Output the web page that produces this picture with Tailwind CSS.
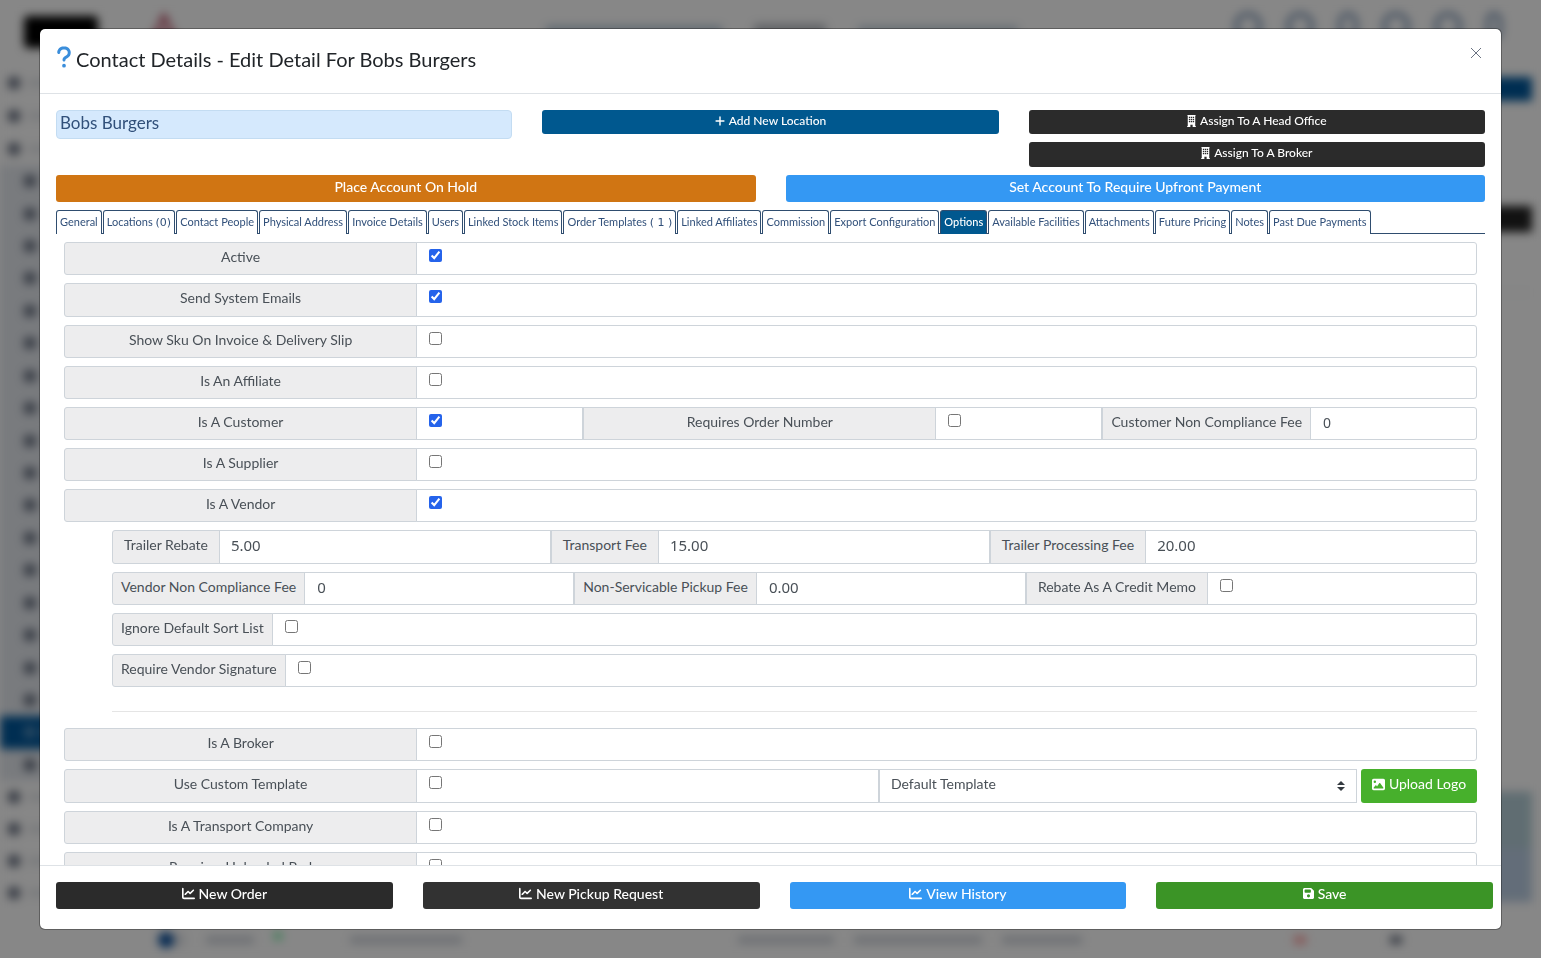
<!DOCTYPE html>
<html lang="en">
<head>
    <meta charset="UTF-8">
    <meta name="viewport" content="width=device-width, initial-scale=1.0">
    <title>Contact Details</title>
    <script src="https://cdn.jsdelivr.net/npm/@tailwindcss/browser@4"></script>
</head>
<body class="bg-white font-['Lato',sans-serif] text-sm text-[#495057]">

    <!-- Icon sprite -->
    <svg class="hidden" xmlns="http://www.w3.org/2000/svg">
        <symbol id="i-question" viewBox="0 0 320 512"><path d="M80 160c0-35.300 28.700-64 64-64h32c35.300 0 64 28.700 64 64v3.600c0 21.800-11.100 42.100-29.400 53.800l-42.200 27.100c-25.200 16.200-40.400 44.100-40.400 74V320c0 17.700 14.300 32 32 32s32-14.300 32-32v-1.400c0-8.200 4.200-15.800 11-20.200l42.200-27.100c36.600-23.600 58.800-64.100 58.800-107.700V160c0-70.700-57.300-128-128-128H144C73.300 32 16 89.300 16 160c0 17.700 14.300 32 32 32s32-14.300 32-32zm80 320a40 40 0 1 0 0-80 40 40 0 1 0 0 80z"/></symbol>
        <symbol id="i-chart" viewBox="0 0 512 512"><path d="M64 64c0-17.700-14.300-32-32-32S0 46.300 0 64V400c0 44.200 35.800 80 80 80H480c17.700 0 32-14.300 32-32s-14.300-32-32-32H80c-8.800 0-16-7.200-16-16V64zm406.600 86.600c12.500-12.500 12.500-32.800 0-45.300s-32.800-12.500-45.300 0L320 210.700l-57.400-57.400c-12.500-12.500-32.800-12.500-45.300 0l-112 112c-12.500 12.500-12.500 32.800 0 45.300s32.800 12.500 45.300 0L240 221.300l57.400 57.400c12.500 12.500 32.800 12.500 45.300 0l128-128z"/></symbol>
        <symbol id="i-plus" viewBox="0 0 448 512"><path d="M256 80c0-17.700-14.300-32-32-32s-32 14.300-32 32V224H48c-17.700 0-32 14.300-32 32s14.300 32 32 32H192V432c0 17.700 14.300 32 32 32s32-14.300 32-32V288H400c17.700 0 32-14.300 32-32s-14.300-32-32-32H256V80z"/></symbol>
        <symbol id="i-image" viewBox="0 0 512 512"><path d="M0 96C0 60.700 28.700 32 64 32H448c35.300 0 64 28.700 64 64V416c0 35.300-28.700 64-64 64H64c-35.300 0-64-28.700-64-64V96zM323.800 202.500c-4.500-6.600-11.900-10.500-19.800-10.500s-15.400 3.900-19.800 10.500l-87 127.600L170.700 297c-4.600-5.700-11.500-9-18.700-9s-14.200 3.300-18.700 9l-64 80c-5.800 7.200-6.900 17.100-2.900 25.400s12.400 13.600 21.600 13.600h336c8.900 0 17.100-4.900 21.200-12.800s3.600-17.400-1.400-24.700l-120-176zM112 192a48 48 0 1 0 0-96 48 48 0 1 0 0 96z"/></symbol>
        <symbol id="i-save" viewBox="0 0 448 512"><path d="M64 32C28.700 32 0 60.700 0 96V416c0 35.300 28.700 64 64 64H384c35.300 0 64-28.700 64-64V173.300c0-17-6.700-33.300-18.700-45.300L352 50.700C340 38.700 323.700 32 306.700 32H64zm0 96c0-17.700 14.300-32 32-32H288c17.700 0 32 14.300 32 32v64c0 17.700-14.300 32-32 32H96c-17.700 0-32-14.300-32-32V128zM224 288a64 64 0 1 1 0 128 64 64 0 1 1 0-128z"/></symbol>
        <symbol id="i-building" viewBox="0 0 384 512"><path fill-rule="evenodd" d="M16 0H368V28H352V484H384V512H240V420H144V512H0V484H32V28H16zM80 72V128H136V72zM164 72V128H220V72zM248 72V128H304V72zM80 164V220H136V164zM164 164V220H220V164zM248 164V220H304V164zM80 256V312H136V256zM164 256V312H220V256zM248 256V312H304V256z"/></symbol>
    </svg>

    <!-- Page behind the modal -->
    <div class="fixed inset-0 flex flex-col overflow-hidden bg-white blur-[5px]" aria-hidden="true">
        <div class="flex h-[67px] shrink-0 items-start pt-3 pr-[39px] pl-6">
            <div class="flex gap-12">
                <div class="mt-1 h-8 w-[74px] rounded bg-black"></div>
                <svg class="size-9" viewBox="0 0 36 36" fill="none" stroke="#b3405a" stroke-width="4"><path d="M4 34L18 4l14 30M10 24h16"/></svg>
            </div>
            <div class="mt-3 mr-auto ml-[364px] flex items-center gap-8">
                <div class="h-2 w-44 bg-[#003a70]/30"></div>
                <div class="h-3 w-[72px] bg-gray-700/35"></div>
                <div class="h-2 w-40 bg-[#003a70]/25"></div>
            </div>
            <div class="flex gap-6 text-[#3b5f8f]/70">
                <div class="size-7 rounded-full border-4"></div>
                <div class="size-7 rounded-full border-4"></div>
                <div class="h-7 w-5 rounded-full border-4"></div>
                <div class="size-7 rounded-full border-4"></div>
                <div class="size-7 rounded-full border-4"></div>
                <div class="h-7 w-4 rounded-full border-4"></div>
            </div>
        </div>
        <div class="flex flex-1">
            <div class="w-[130px] shrink-0">
                <ul id="menuTop" class="grid h-[98px] auto-rows-fr"></ul>
                <ul id="menuSub" class="grid h-[616px] auto-rows-fr bg-[#e4e8ee]"></ul>
                <ul id="menuBottom" class="grid h-[128px] auto-rows-fr"></ul>
            </div>
            <div class="flex flex-1 flex-col pt-[10px] pr-[9px] pl-5">
                <div class="h-6 bg-[#00579b]"></div>
                <div class="mt-[105px] h-[26px] bg-[#222]"></div>
                <div class="mt-[60px] h-[500px] border-y border-gray-200"></div>
                <div class="h-[56px] bg-[#b5cfd8]"></div>
                <div class="h-[54px] bg-[#bccfe4]"></div>
                <div class="mt-[30px] flex items-start gap-5 pl-2">
                    <div class="flex h-4 w-7 rounded-full bg-gray-200"><span class="size-4 rounded-full bg-[#0b4f9b]"></span></div>
                    <div class="mt-1 h-2 w-12 bg-gray-300"></div>
                    <div class="mr-12 h-2 w-2 bg-green-300"></div>
                    <div class="mt-1 mr-64 h-2 w-28 bg-gray-300"></div>
                    <div class="mt-1 h-2 w-24 bg-gray-300"></div>
                    <div class="mt-1 h-2 w-32 bg-gray-300"></div>
                    <div class="mt-1 mr-48 h-2 w-20 bg-gray-300"></div>
                    <div class="mt-1 mr-16 h-2 w-3 bg-red-300"></div>
                    <div class="mt-1 h-2 w-3 bg-gray-500"></div>
                </div>
            </div>
        </div>
    </div>
    <div class="fixed inset-0 bg-black/47"></div>

    <!-- Contact modal -->
    <div class="fixed inset-0 px-[39px] py-7">
        <div role="dialog" aria-labelledby="modalTitle" class="flex h-full flex-col overflow-hidden rounded-md border border-black/30 bg-white bg-clip-padding">

            <!-- Header -->
            <div class="flex h-[65px] shrink-0 items-start justify-between border-b border-[#dee2e6] px-4 pt-4">
                <h5 id="modalTitle" class="flex items-start gap-1 text-xl text-[#212529]">
                    <svg class="h-6 w-4 fill-[#3b8edb]"><use href="#i-question"/></svg>
                    Contact Details - Edit Detail For Bobs Burgers
                </h5>
                <button type="button" aria-label="Close" class="mt-[2px] mr-[3px] text-gray-500">
                    <svg class="size-3 stroke-current" viewBox="0 0 12 12" fill="none"><path d="M1 1l10 10M11 1L1 11"/></svg>
                </button>
            </div>

            <!-- Body -->
            <div class="min-h-0 flex-1 overflow-y-auto p-4 [scrollbar-width:none]">
                <div class="grid grid-cols-3 gap-[30px]">
                    <div>
                        <input type="text" aria-label="Contact name" value="Bobs Burgers" class="h-[29px] w-full rounded border border-[#c3dcf2] bg-[#d5e9fd] px-[3px] pb-1 text-[17px] text-[#31507a]">
                    </div>
                    <div>
                        <button type="button" class="flex h-6 w-full items-center justify-center gap-1 rounded-[3px] bg-[#00588f] pb-[2px] text-xs font-medium text-white"><svg class="h-3 w-[10px] fill-current"><use href="#i-plus"/></svg>Add New Location</button>
                    </div>
                    <div class="flex flex-col gap-2">
                        <button type="button" class="flex h-6 w-full items-center justify-center gap-1 rounded-[3px] bg-[#2b2b2b] pb-[2px] text-xs font-medium text-white"><svg class="h-3 w-[9px] fill-current"><use href="#i-building"/></svg>Assign To A Head Office</button>
                        <button type="button" class="flex h-[25px] w-full items-center justify-center gap-1 rounded-[3px] bg-[#2b2b2b] pb-1 text-xs font-medium text-white"><svg class="h-3 w-[9px] fill-current"><use href="#i-building"/></svg>Assign To A Broker</button>
                    </div>
                </div>

                <div class="mt-2 grid grid-cols-2 gap-[30px] text-sm font-medium text-white">
                    <button type="button" class="h-[27px] rounded-[3px] bg-[#d07513] pb-1">Place Account On Hold</button>
                    <button type="button" class="h-[27px] rounded-[3px] bg-[#3498f3] pb-1">Set Account To Require Upfront Payment</button>
                </div>

                <!-- Tabs -->
                <div id="tabs" class="mt-2 flex h-6 gap-px border-b border-[#2f4d6f] text-[11px] whitespace-nowrap text-[#31507a]"></div>

                <!-- Options tab -->
                <div class="flex flex-col gap-2 p-2">
                    <div class="flex h-[33px]">
                        <label for="active" class="w-1/4 rounded-l-[3px] border border-[#ced4da] bg-[#ededee] pt-1 text-center">Active</label>
                        <div class="-ml-px flex-1 rounded-r-[3px] border border-[#ced4da] px-3 pt-[6px]"><input id="active" type="checkbox" checked class="block size-[13px] accent-[#2563eb]"></div>
                    </div>
                    <div class="flex h-[34px]">
                        <label for="emails" class="w-1/4 rounded-l-[3px] border border-[#ced4da] bg-[#ededee] pt-1 text-center">Send System Emails</label>
                        <div class="-ml-px flex-1 rounded-r-[3px] border border-[#ced4da] px-3 pt-[6px]"><input id="emails" type="checkbox" checked class="block size-[13px] accent-[#2563eb]"></div>
                    </div>
                    <div class="flex h-[33px]">
                        <label for="sku" class="w-1/4 rounded-l-[3px] border border-[#ced4da] bg-[#ededee] pt-1 text-center">Show Sku On Invoice &amp; Delivery Slip</label>
                        <div class="-ml-px flex-1 rounded-r-[3px] border border-[#ced4da] px-3 pt-[6px]"><input id="sku" type="checkbox" class="block size-[13px] accent-[#2563eb]"></div>
                    </div>
                    <div class="flex h-[33px]">
                        <label for="affiliate" class="w-1/4 rounded-l-[3px] border border-[#ced4da] bg-[#ededee] pt-1 text-center">Is An Affiliate</label>
                        <div class="-ml-px flex-1 rounded-r-[3px] border border-[#ced4da] px-3 pt-[6px]"><input id="affiliate" type="checkbox" class="block size-[13px] accent-[#2563eb]"></div>
                    </div>
                    <div class="flex h-[33px]">
                        <label for="customer" class="w-1/4 shrink-0 rounded-l-[3px] border border-[#ced4da] bg-[#ededee] pt-1 text-center">Is A Customer</label>
                        <div class="-ml-px flex-1 border border-[#ced4da] px-3 pt-[6px]"><input id="customer" type="checkbox" checked class="block size-[13px] accent-[#2563eb]"></div>
                        <label for="orderNumber" class="w-1/4 shrink-0 border border-[#ced4da] bg-[#ededee] pt-1 text-center">Requires Order Number</label>
                        <div class="-ml-px flex-1 border border-[#ced4da] px-3 pt-[6px]"><input id="orderNumber" type="checkbox" class="block size-[13px] accent-[#2563eb]"></div>
                        <label for="customerFee" class="border border-[#ced4da] bg-[#ededee] px-2 pt-1">Customer Non Compliance Fee</label>
                        <input id="customerFee" type="text" value="0" class="-ml-px w-0 flex-1 rounded-r-[3px] border border-[#ced4da] px-3 pb-[2px] font-['Noto_Sans',sans-serif]">
                    </div>
                    <div class="flex h-[33px]">
                        <label for="supplier" class="w-1/4 rounded-l-[3px] border border-[#ced4da] bg-[#ededee] pt-1 text-center">Is A Supplier</label>
                        <div class="-ml-px flex-1 rounded-r-[3px] border border-[#ced4da] px-3 pt-[6px]"><input id="supplier" type="checkbox" class="block size-[13px] accent-[#2563eb]"></div>
                    </div>
                    <div class="flex h-[33px]">
                        <label for="vendor" class="w-1/4 rounded-l-[3px] border border-[#ced4da] bg-[#ededee] pt-1 text-center">Is A Vendor</label>
                        <div class="-ml-px flex-1 rounded-r-[3px] border border-[#ced4da] px-3 pt-[6px]"><input id="vendor" type="checkbox" checked class="block size-[13px] accent-[#2563eb]"></div>
                    </div>

                    <!-- Vendor settings -->
                    <div class="ml-12 flex flex-col gap-2">
                        <div class="flex h-[34px]">
                            <label for="rebate" class="rounded-l-[3px] border border-[#ced4da] bg-[#ededee] px-[11px] pt-1">Trailer Rebate</label>
                            <input id="rebate" type="text" value="5.00" class="-ml-px w-0 flex-1 border border-[#ced4da] px-[11px] pb-[2px] font-['Noto_Sans',sans-serif] text-[15px]">
                            <label for="transport" class="border border-[#ced4da] bg-[#ededee] px-[11px] pt-1">Transport Fee</label>
                            <input id="transport" type="text" value="15.00" class="-ml-px w-0 flex-1 border border-[#ced4da] px-[11px] pb-[2px] font-['Noto_Sans',sans-serif] text-[15px]">
                            <label for="processing" class="border border-[#ced4da] bg-[#ededee] px-[11px] pt-1">Trailer Processing Fee</label>
                            <input id="processing" type="text" value="20.00" class="-ml-px w-0 flex-1 rounded-r-[3px] border border-[#ced4da] px-[11px] pb-[2px] font-['Noto_Sans',sans-serif] text-[15px]">
                        </div>
                        <div class="flex h-[33px]">
                            <label for="vendorFee" class="rounded-l-[3px] border border-[#ced4da] bg-[#ededee] px-2 pt-1">Vendor Non Compliance Fee</label>
                            <input id="vendorFee" type="text" value="0" class="-ml-px w-0 flex-1 border border-[#ced4da] px-3 pb-[2px] font-['Noto_Sans',sans-serif] text-[15px]">
                            <label for="pickupFee" class="border border-[#ced4da] bg-[#ededee] px-2 pt-1">Non-Servicable Pickup Fee</label>
                            <input id="pickupFee" type="text" value="0.00" class="-ml-px w-0 flex-1 border border-[#ced4da] px-3 pb-[2px] font-['Noto_Sans',sans-serif] text-[15px]">
                            <label for="creditMemo" class="border border-[#ced4da] bg-[#ededee] px-[11px] pt-1">Rebate As A Credit Memo</label>
                            <div class="-ml-px w-0 flex-1 rounded-r-[3px] border border-[#ced4da] px-3 pt-[6px]"><input id="creditMemo" type="checkbox" class="block size-[13px] accent-[#2563eb]"></div>
                        </div>
                        <div class="flex h-[33px]">
                            <label for="sortList" class="rounded-l-[3px] border border-[#ced4da] bg-[#ededee] px-2 pt-1">Ignore Default Sort List</label>
                            <div class="-ml-px flex-1 rounded-r-[3px] border border-[#ced4da] px-3 pt-[6px]"><input id="sortList" type="checkbox" class="block size-[13px] accent-[#2563eb]"></div>
                        </div>
                        <div class="flex h-[33px]">
                            <label for="signature" class="rounded-l-[3px] border border-[#ced4da] bg-[#ededee] px-2 pt-1">Require Vendor Signature</label>
                            <div class="-ml-px flex-1 rounded-r-[3px] border border-[#ced4da] px-3 pt-[6px]"><input id="signature" type="checkbox" class="block size-[13px] accent-[#2563eb]"></div>
                        </div>
                        <hr class="mt-4 mb-2 border-[#e5e5e5]">
                    </div>

                    <div class="flex h-[33px]">
                        <label for="broker" class="w-1/4 rounded-l-[3px] border border-[#ced4da] bg-[#ededee] pt-1 text-center">Is A Broker</label>
                        <div class="-ml-px flex-1 rounded-r-[3px] border border-[#ced4da] px-3 pt-[6px]"><input id="broker" type="checkbox" class="block size-[13px] accent-[#2563eb]"></div>
                    </div>
                    <div class="flex h-[34px]">
                        <label for="custom" class="w-1/4 shrink-0 rounded-l-[3px] border border-[#ced4da] bg-[#ededee] pt-1 text-center">Use Custom Template</label>
                        <div class="-ml-px flex-1 border border-[#ced4da] px-3 pt-[6px]"><input id="custom" type="checkbox" class="block size-[13px] accent-[#2563eb]"></div>
                        <div class="relative w-[478px]">
                            <select aria-label="Template" class="h-full w-full appearance-none border border-[#ced4da] bg-white px-[11px] pb-1">
                                <option>Default Template</option>
                            </select>
                            <svg class="pointer-events-none absolute top-3 right-3 h-[10px] w-2 fill-[#343a40]" viewBox="0 0 8 10"><path d="M4 0l4 4H0zM4 10L0 6h8z"/></svg>
                        </div>
                        <button type="button" class="ml-1 flex w-[116px] items-center justify-center gap-1 rounded-[3px] bg-[#47b02c] pb-1 text-white"><svg class="h-[13px] w-[13px] fill-current"><use href="#i-image"/></svg>Upload Logo</button>
                    </div>
                    <div class="flex h-[33px]">
                        <label for="company" class="w-1/4 rounded-l-[3px] border border-[#ced4da] bg-[#ededee] pt-1 text-center">Is A Transport Company</label>
                        <div class="-ml-px flex-1 rounded-r-[3px] border border-[#ced4da] px-3 pt-[6px]"><input id="company" type="checkbox" class="block size-[13px] accent-[#2563eb]"></div>
                    </div>
                    <div class="flex h-[33px]">
                        <label for="pods" class="w-1/4 rounded-l-[3px] border border-[#ced4da] bg-[#ededee] pt-1 text-center">Requires Uploaded Pod</label>
                        <div class="-ml-px flex-1 rounded-r-[3px] border border-[#ced4da] px-3 pt-[6px]"><input id="pods" type="checkbox" class="block size-[13px] accent-[#2563eb]"></div>
                    </div>
                </div>
            </div>

            <!-- Footer -->
            <div class="grid shrink-0 grid-cols-4 gap-[30px] border-t border-[#dee2e6] pt-4 pr-2 pb-5 pl-4 text-sm font-medium text-white">
                <button type="button" class="flex h-[27px] items-center justify-center gap-1 rounded-[3px] bg-[#2b2b2b] pb-1"><svg class="size-[13px] fill-current"><use href="#i-chart"/></svg>New Order</button>
                <button type="button" class="flex h-[27px] items-center justify-center gap-1 rounded-[3px] bg-[#323232] pb-1"><svg class="size-[13px] fill-current"><use href="#i-chart"/></svg>New Pickup Request</button>
                <button type="button" class="flex h-[27px] items-center justify-center gap-1 rounded-[3px] bg-[#3498f3] pb-1"><svg class="size-[13px] fill-current"><use href="#i-chart"/></svg>View History</button>
                <button type="button" class="flex h-[27px] items-center justify-center gap-1 rounded-[3px] bg-[#3b9426] pb-1"><svg class="h-[13px] w-[11px] fill-current"><use href="#i-save"/></svg>Save</button>
            </div>
        </div>
    </div>

    <script>
        // Tabs, with an optional count after the name
        const tabs = [['General'], ['Locations', '(0)'], ['Contact People'], ['Physical Address'], ['Invoice Details'], ['Users'], ['Linked Stock Items'], ['Order Templates', '( 1 )'], ['Linked Affiliates'], ['Commission'], ['Export Configuration'], ['Options'], ['Available Facilities'], ['Attachments'], ['Future Pricing'], ['Notes'], ['Past Due Payments']];
        document.getElementById('tabs').innerHTML = tabs.map(function ([name, count]) {
            const state = name === 'Options' ? 'bg-[#00588f] text-white font-medium' : 'bg-white';
            const suffix = count ? ` <span class="font-['DejaVu_Sans',sans-serif] leading-none">${count}</span>` : '';
            return `<button type="button" class="h-6 rounded-t-[3px] border border-b-0 border-[#2f4d6f] px-[3px] pb-[2px] ${state}">${name}${suffix}</button>`;
        }).join('');

        // Sidebar entries of the page behind
        function fillMenu(id, count, active, nested) {
            let html = '';
            for (let i = 0; i < count; i++) {
                html += `<li class="flex items-center gap-2 ${nested ? 'pl-6' : 'pl-2'} ${i === active ? 'bg-[#00579b]' : ''}"><span class="size-3 rounded-sm ${i === active ? 'bg-white/30' : 'bg-gray-500'}"></span><span class="h-2 w-14 bg-gray-200"></span></li>`;
            }
            document.getElementById(id).innerHTML = html;
        }
        fillMenu('menuTop', 3, -1, false);
        fillMenu('menuSub', 19, 17, true);
        fillMenu('menuBottom', 4, -1, false);
    </script>
</body>
</html>
